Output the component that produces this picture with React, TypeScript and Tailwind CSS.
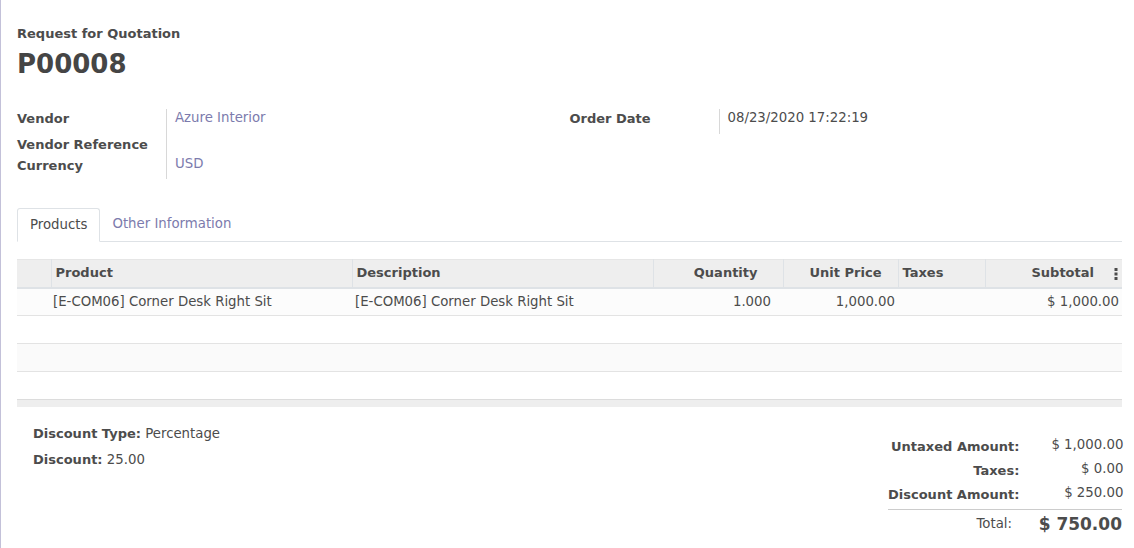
import React from "react";

const font = { fontFamily: '"DejaVu Sans", Verdana, sans-serif' };

function Kebab() {
  return (
    <svg width="4" height="12" viewBox="0 0 4 12" className="inline-block">
      <rect x="0.5" y="0" width="3" height="3" fill="#4c4c4c" />
      <rect x="0.5" y="4.5" width="3" height="3" fill="#4c4c4c" />
      <rect x="0.5" y="9" width="3" height="3" fill="#4c4c4c" />
    </svg>
  );
}

export default function App() {
  return (
    <div
      className="min-h-[548px] border-l border-[#c3c1d9] bg-white pl-4 pr-3 text-[13.3px] leading-[20px] text-[#4c4c4c]"
      style={font}
    >
      <div className="pt-[24px]">
        <div className="text-[13px] font-bold">Request for Quotation</div>
        <div className="mt-[3px] text-[26px] font-bold leading-[34px] text-[#454545]">P00008</div>
      </div>

      <div className="mt-[28px] grid grid-cols-2">
        <div className="flex flex-col">
          <div className="flex h-[25px]">
            <div className="w-[149px] text-[13px] font-bold">Vendor</div>
            <div className="border-l border-[#d8d8d8] pl-2">
              <span className="-mt-px block text-[#7c7bad]">Azure Interior</span>
            </div>
          </div>
          <div className="flex h-[21px]">
            <div className="w-[149px] pt-px text-[13px] font-bold">Vendor Reference</div>
            <div className="border-l border-[#d8d8d8] pl-2"></div>
          </div>
          <div className="flex h-[24px]">
            <div className="w-[149px] pt-px text-[13px] font-bold">Currency</div>
            <div className="border-l border-[#d8d8d8] pl-2">
              <span className="-mt-[1px] block text-[#7c7bad]">USD</span>
            </div>
          </div>
        </div>
        <div className="flex flex-col">
          <div className="flex h-[25px]">
            <div className="w-[149px] text-[13px] font-bold">Order Date</div>
            <div className="border-l border-[#d8d8d8] pl-2">
              <span className="-mt-px block">08/23/2020 17:22:19</span>
            </div>
          </div>
        </div>
      </div>

      <div className="mt-[29px] flex border-b border-[#dee2e6]">
        <div className="-mb-px rounded-t-[3px] border border-[#dee2e6] border-b-white bg-white px-3 py-[6px]">
          Products
        </div>
        <div className="px-3 py-[6px] text-[#7c7bad]">Other Information</div>
      </div>

      <table className="mt-[17px] w-full table-fixed border-collapse">
        <colgroup>
          <col className="w-[34px]" />
          <col className="w-[301px]" />
          <col className="w-[301px]" />
          <col className="w-[130px]" />
          <col className="w-[115px]" />
          <col className="w-[87px]" />
          <col />
        </colgroup>
        <thead>
          <tr className="h-[28px] border-t border-b-2 border-t-[#e6e6e6] border-b-[#dee2e6] bg-[#eeeeee] text-[13px] font-bold">
            <th className="border-r border-[#dee2e6] p-0"></th>
            <th className="border-r border-[#dee2e6] p-0 pl-1 text-left">Product</th>
            <th className="border-r border-[#dee2e6] p-0 pl-1 text-left">Description</th>
            <th className="border-r border-[#dee2e6] p-0 pr-[25px] text-right">Quantity</th>
            <th className="border-r border-[#dee2e6] p-0 pr-[16px] text-right">Unit Price</th>
            <th className="border-r border-[#dee2e6] p-0 pl-1 text-left">Taxes</th>
            <th className="p-0 pr-[4px] text-right">
              <span className="mr-[20px]">Subtotal</span>
              <Kebab />
            </th>
          </tr>
        </thead>
        <tbody>
          <tr className="h-[28px] border-b border-[#e3e3e3] bg-[#fcfcfc]">
            <td></td>
            <td className="pl-[2px]">[E-COM06] Corner Desk Right Sit</td>
            <td className="pl-[3px]">[E-COM06] Corner Desk Right Sit</td>
            <td className="pr-[12px] text-right">1.000</td>
            <td className="pr-[3px] text-right">1,000.00</td>
            <td></td>
            <td className="pr-[3px] text-right">$ 1,000.00</td>
          </tr>
          <tr className="h-[28px] border-b border-[#e3e3e3] bg-white">
            <td colSpan={7}></td>
          </tr>
          <tr className="h-[28px] border-b border-[#e3e3e3] bg-[#fafafa]">
            <td colSpan={7}></td>
          </tr>
          <tr className="h-[28px] border-b border-[#dcdcdc] bg-white">
            <td colSpan={7}></td>
          </tr>
        </tbody>
        <tfoot>
          <tr className="h-[7px] bg-[#eeeeee]">
            <td colSpan={7}></td>
          </tr>
        </tfoot>
      </table>

      <div className="flex justify-between">
        <div className="pl-4 pt-[17px]">
          <div>
            <span className="text-[13px] font-bold">Discount Type:</span> Percentage
          </div>
          <div className="mt-[6px]">
            <span className="text-[13px] font-bold">Discount:</span> 25.00
          </div>
        </div>
        <div className="w-[234px] pt-[28px]">
          <div className="grid grid-cols-[1fr_104px] whitespace-nowrap">
            <div className="h-[24px] pt-[2px] text-right text-[13px] font-bold">Untaxed Amount:</div>
            <div className="h-[24px] text-right">$ 1,000.00</div>
            <div className="h-[24px] pt-[2px] text-right text-[13px] font-bold">Taxes:</div>
            <div className="h-[24px] text-right">$ 0.00</div>
            <div className="h-[24px] pt-[2px] text-right text-[13px] font-bold">Discount Amount:</div>
            <div className="h-[24px] text-right">$ 250.00</div>
          </div>
          <div className="mt-[2px] flex items-center border-t border-[#cccccc] pt-[2px]">
            <div className="flex-1 pr-[6px] text-right">Total:</div>
            <div className="w-[104px] text-right text-[17px] font-bold leading-[24px]">$ 750.00</div>
          </div>
        </div>
      </div>
    </div>
  );
}
